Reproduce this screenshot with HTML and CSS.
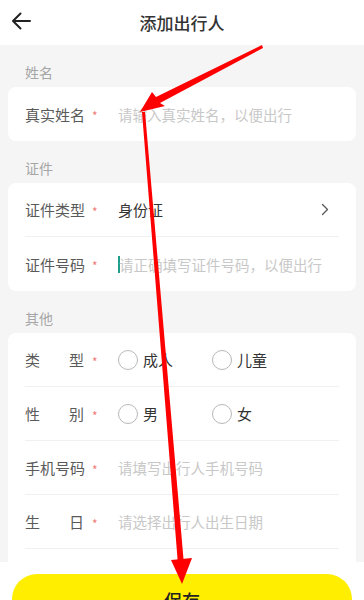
FILE: index.html
```html
<!DOCTYPE html>
<html lang="zh-CN">
<head>
  <meta charset="UTF-8" />
  <meta name="viewport" content="width=device-width, initial-scale=1" />
  <title>添加出行人</title>
  <link rel="stylesheet" href="styles.css">
</head>
<body>
  <div class="page">
    <header class="top-bar">
      <svg class="back-icon" width="20" height="18" viewBox="0 0 20 18">
        <path d="M19 9H2M9.5 1.5L2 9l7.5 7.5" fill="none" stroke="#222" stroke-width="2" stroke-linecap="round" stroke-linejoin="round"/>
      </svg>
      <h1 class="top-title">添加出行人</h1>
    </header>

    <main class="content">
      <p class="section-label">姓名</p>
      <div class="card">
        <div class="row">
          <span class="field-label">真实姓名</span><span class="star">*</span>
          <span class="placeholder">请输入真实姓名，以便出行</span>
        </div>
      </div>

      <p class="section-label">证件</p>
      <div class="card">
        <div class="row">
          <span class="field-label">证件类型</span><span class="star">*</span>
          <span class="value">身份证</span>
          <svg class="chevron" width="8" height="13" viewBox="0 0 8 13">
            <path d="M1.5 1.5l5 5-5 5" fill="none" stroke="#555" stroke-width="1.3" stroke-linecap="round" stroke-linejoin="round"/>
          </svg>
        </div>
        <div class="row">
          <span class="field-label">证件号码</span><span class="star">*</span>
          <span class="cursor"></span>
          <span class="placeholder">请正确填写证件号码，以便出行</span>
        </div>
      </div>

      <p class="section-label">其他</p>
      <div class="card">
        <div class="row">
          <span class="field-label spread">类型</span><span class="star">*</span>
          <div class="radios">
            <label class="radio"><span class="circle"></span>成人</label>
            <label class="radio"><span class="circle"></span>儿童</label>
          </div>
        </div>
        <div class="row">
          <span class="field-label spread">性别</span><span class="star">*</span>
          <div class="radios">
            <label class="radio"><span class="circle"></span>男</label>
            <label class="radio"><span class="circle"></span>女</label>
          </div>
        </div>
        <div class="row">
          <span class="field-label">手机号码</span><span class="star">*</span>
          <span class="placeholder">请填写出行人手机号码</span>
        </div>
        <div class="row">
          <span class="field-label spread">生日</span><span class="star">*</span>
          <span class="placeholder">请选择出行人出生日期</span>
        </div>
        <div class="row"></div>
      </div>
    </main>

    <footer class="bottom-bar">
      <button class="save-btn">保存</button>
    </footer>

    <!-- annotation arrows drawn over the screenshot -->
    <svg class="arrows" width="364" height="600" viewBox="0 0 364 600">
      <polygon fill="#f00" points="262,45 263,48 160,103 165,106 140,112 152,92 156,97"/>
      <polygon fill="#f00" points="142,112 145,112 184,565 178,565"/>
      <polygon fill="#f00" points="171,560 192,558 182,584"/>
    </svg>
  </div>
</body>
</html>
```

FILE: styles.css
```css
* {
  box-sizing: border-box;
}

body {
  margin: 0;
  font-family: "Noto Sans CJK SC", "Noto Sans", sans-serif;
  background: #fff;
  overflow: hidden;
}

.page {
  position: relative;
  width: 364px;
  height: 600px;
  overflow: hidden;
}

.top-bar {
  height: 45px;
  display: flex;
  align-items: center;
  justify-content: center;
  position: relative;
  background: #fff;
}

.back-icon {
  position: absolute;
  left: 11px;
  top: 12px;
}

.top-title {
  margin: 0;
  font-size: 17px;
  font-weight: 500;
  color: #333;
}

.content {
  height: 517px;
  overflow: hidden;
  background: #f5f5f5;
  padding: 0 8px;
}

.section-label {
  margin: 0;
  height: 42px;
  padding: 17px 0 0 17px;
  font-size: 14px;
  line-height: 20px;
  color: #a6a6a6;
}

.card {
  background: #fff;
  border-radius: 8px;
  padding: 0 17px;
}

.row {
  height: 54px;
  display: flex;
  align-items: center;
  border-bottom: 1px solid #f0f0f0;
  font-size: 15px;
}

.row:last-child {
  border-bottom: none;
}

.field-label {
  width: 59px;
  color: #5a5a5a;
  white-space: nowrap;
}

.field-label.spread {
  text-align: justify;
  text-align-last: justify;
}

.star {
  color: #f67a7a;
  font-size: 12px;
  margin-left: 8px;
  padding-top: 3px;
  width: 26px;
}

.placeholder {
  color: #c8c8c8;
  font-size: 14.5px;
}

.value {
  color: #333;
  flex: 1;
}

.chevron {
  margin-right: 10px;
}

.cursor {
  width: 2px;
  height: 17px;
  background: #1f9e8c;
  margin-right: -1px;
}

.radios {
  display: flex;
}

.radio {
  display: flex;
  align-items: center;
  width: 94px;
  color: #333;
  font-size: 15px;
}

.circle {
  width: 20px;
  height: 20px;
  border: 1px solid #b8b8b8;
  border-radius: 50%;
  margin-right: 5px;
}

.bottom-bar {
  padding: 12px 12px 0;
  background: #fff;
}

.save-btn {
  width: 100%;
  height: 50px;
  border: none;
  border-radius: 25px;
  background: #ffee00;
  font-family: inherit;
  font-size: 18px;
  font-weight: 500;
  color: #222;
  padding-top: 2px;
}

.arrows {
  position: absolute;
  left: 0;
  top: 0;
  pointer-events: none;
}
```
